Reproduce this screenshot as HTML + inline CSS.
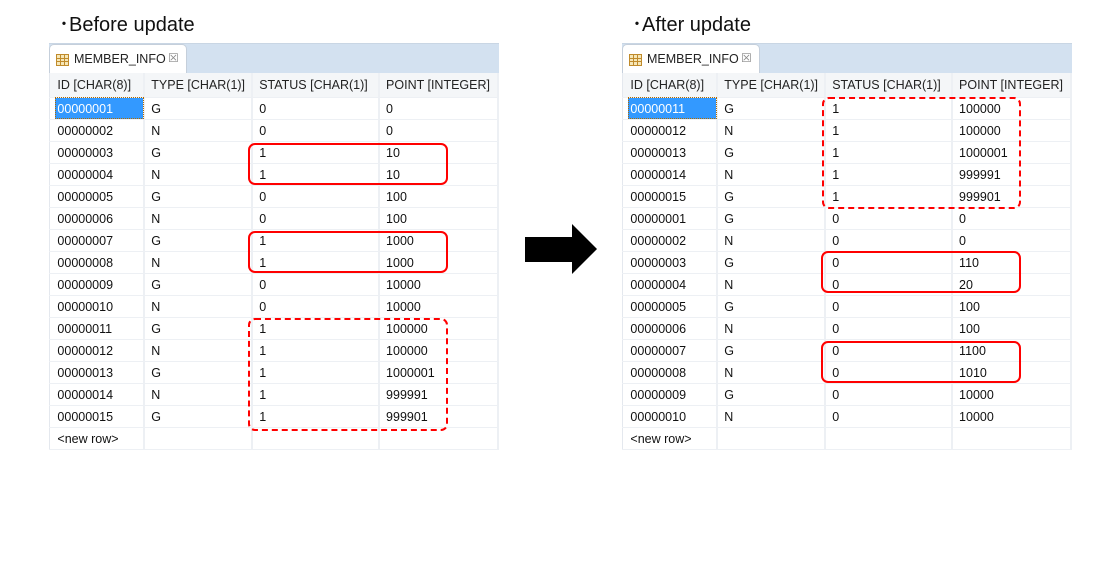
<!DOCTYPE html>
<html><head><meta charset="utf-8"><style>
body{margin:0;width:1115px;height:588px;background:#fff;position:relative;overflow:hidden;font-family:"Liberation Sans","Noto Sans CJK JP",sans-serif;}
.title{position:absolute;top:8px;font-size:20px;color:#111;}
.title b{font-weight:normal;display:inline-block;width:10px;}
.wrap{position:absolute;top:43px;width:450px;height:410px;}
.tabbar{position:absolute;left:0;top:0;width:450px;height:29px;background:#d3e1f0;border-top:1px solid #c9d6e4;}
.tab{position:absolute;left:0;top:1px;width:136px;height:29px;background:#fff;border:1px solid #c5cfdb;border-bottom:none;border-radius:5px 5px 0 0;font-size:12.5px;color:#222;}
.tab .ic{position:absolute;left:6px;top:9px;width:11px;height:10px;border:1px solid #c08b2c;background:
linear-gradient(#c08b2c,#c08b2c) 0 3px/100% 1px no-repeat,linear-gradient(#c08b2c,#c08b2c) 0 6px/100% 1px no-repeat,linear-gradient(#c08b2c,#c08b2c) 3px 0/1px 100% no-repeat,linear-gradient(#c08b2c,#c08b2c) 7px 0/1px 100% no-repeat,#f6e7b8;}
.tab .t{position:absolute;left:24px;top:7px;}
.tab .x{position:absolute;left:118px;top:6px;font-size:12px;color:#888;}
table{position:absolute;left:0;top:30px;border-collapse:collapse;table-layout:fixed;font-size:12.5px;color:#111;border-left:1px solid #e4e8ee;}
td{padding:1px 0 0 6px;box-sizing:border-box;border-right:2px solid #edf0f4;border-bottom:1px solid #edf0f4;white-space:nowrap;overflow:hidden;}
tr td{height:22px}
tr.h td{height:24px;background:#f4f6f8;color:#222;}
td.g{padding:0;border-right:none;}
td.c1{padding-left:2px}
td.sel{background:#3399ff;color:#fff;outline:1px dotted #b06a00;outline-offset:-1px;}
.box{position:absolute;border:2px solid #f00;border-radius:7px;box-sizing:border-box;}
.dash{border-style:dashed;}
</style></head><body>
<div class="title" style="left:59px"><b>･</b>Before update</div>
<div class="title" style="left:632px"><b>･</b>After update</div>

<div class="wrap" style="left:49px">
<div class="tabbar"></div>
<div class="tab"><div class="ic"></div><span class="t">MEMBER_INFO</span><span class="x">☒</span></div>
<table>
<colgroup><col style="width:6px"><col style="width:89px"><col style="width:108px"><col style="width:127px"><col style="width:119px"></colgroup>
<tr class="h"><td class="g"></td><td class="c1">ID [CHAR(8)]</td><td>TYPE [CHAR(1)]</td><td>STATUS [CHAR(1)]</td><td>POINT [INTEGER]</td></tr>
<tr><td class="g"></td><td class="c1 sel">00000001</td><td>G</td><td>0</td><td>0</td></tr>
<tr><td class="g"></td><td class="c1">00000002</td><td>N</td><td>0</td><td>0</td></tr>
<tr><td class="g"></td><td class="c1">00000003</td><td>G</td><td>1</td><td>10</td></tr>
<tr><td class="g"></td><td class="c1">00000004</td><td>N</td><td>1</td><td>10</td></tr>
<tr><td class="g"></td><td class="c1">00000005</td><td>G</td><td>0</td><td>100</td></tr>
<tr><td class="g"></td><td class="c1">00000006</td><td>N</td><td>0</td><td>100</td></tr>
<tr><td class="g"></td><td class="c1">00000007</td><td>G</td><td>1</td><td>1000</td></tr>
<tr><td class="g"></td><td class="c1">00000008</td><td>N</td><td>1</td><td>1000</td></tr>
<tr><td class="g"></td><td class="c1">00000009</td><td>G</td><td>0</td><td>10000</td></tr>
<tr><td class="g"></td><td class="c1">00000010</td><td>N</td><td>0</td><td>10000</td></tr>
<tr><td class="g"></td><td class="c1">00000011</td><td>G</td><td>1</td><td>100000</td></tr>
<tr><td class="g"></td><td class="c1">00000012</td><td>N</td><td>1</td><td>100000</td></tr>
<tr><td class="g"></td><td class="c1">00000013</td><td>G</td><td>1</td><td>1000001</td></tr>
<tr><td class="g"></td><td class="c1">00000014</td><td>N</td><td>1</td><td>999991</td></tr>
<tr><td class="g"></td><td class="c1">00000015</td><td>G</td><td>1</td><td>999901</td></tr>
<tr><td class="g"></td><td class="c1">&lt;new row&gt;</td><td></td><td></td><td></td></tr>
</table>
</div>

<div class="wrap" style="left:622px">
<div class="tabbar"></div>
<div class="tab"><div class="ic"></div><span class="t">MEMBER_INFO</span><span class="x">☒</span></div>
<table>
<colgroup><col style="width:6px"><col style="width:89px"><col style="width:108px"><col style="width:127px"><col style="width:119px"></colgroup>
<tr class="h"><td class="g"></td><td class="c1">ID [CHAR(8)]</td><td>TYPE [CHAR(1)]</td><td>STATUS [CHAR(1)]</td><td>POINT [INTEGER]</td></tr>
<tr><td class="g"></td><td class="c1 sel">00000011</td><td>G</td><td>1</td><td>100000</td></tr>
<tr><td class="g"></td><td class="c1">00000012</td><td>N</td><td>1</td><td>100000</td></tr>
<tr><td class="g"></td><td class="c1">00000013</td><td>G</td><td>1</td><td>1000001</td></tr>
<tr><td class="g"></td><td class="c1">00000014</td><td>N</td><td>1</td><td>999991</td></tr>
<tr><td class="g"></td><td class="c1">00000015</td><td>G</td><td>1</td><td>999901</td></tr>
<tr><td class="g"></td><td class="c1">00000001</td><td>G</td><td>0</td><td>0</td></tr>
<tr><td class="g"></td><td class="c1">00000002</td><td>N</td><td>0</td><td>0</td></tr>
<tr><td class="g"></td><td class="c1">00000003</td><td>G</td><td>0</td><td>110</td></tr>
<tr><td class="g"></td><td class="c1">00000004</td><td>N</td><td>0</td><td>20</td></tr>
<tr><td class="g"></td><td class="c1">00000005</td><td>G</td><td>0</td><td>100</td></tr>
<tr><td class="g"></td><td class="c1">00000006</td><td>N</td><td>0</td><td>100</td></tr>
<tr><td class="g"></td><td class="c1">00000007</td><td>G</td><td>0</td><td>1100</td></tr>
<tr><td class="g"></td><td class="c1">00000008</td><td>N</td><td>0</td><td>1010</td></tr>
<tr><td class="g"></td><td class="c1">00000009</td><td>G</td><td>0</td><td>10000</td></tr>
<tr><td class="g"></td><td class="c1">00000010</td><td>N</td><td>0</td><td>10000</td></tr>
<tr><td class="g"></td><td class="c1">&lt;new row&gt;</td><td></td><td></td><td></td></tr>
</table>
</div>

<div class="box" style="left:248px;top:143px;width:200px;height:42px"></div>
<div class="box" style="left:248px;top:231px;width:200px;height:42px"></div>
<div class="box dash" style="left:248px;top:318px;width:200px;height:113px"></div>
<div class="box dash" style="left:822px;top:97px;width:199px;height:112px"></div>
<div class="box" style="left:821px;top:251px;width:200px;height:42px"></div>
<div class="box" style="left:821px;top:341px;width:200px;height:42px"></div>

<svg style="position:absolute;left:0;top:0" width="1115" height="588"><polygon points="525,237 572,237 572,224 597,249 572,274 572,262 525,262" fill="#000"/></svg>
</body></html>
